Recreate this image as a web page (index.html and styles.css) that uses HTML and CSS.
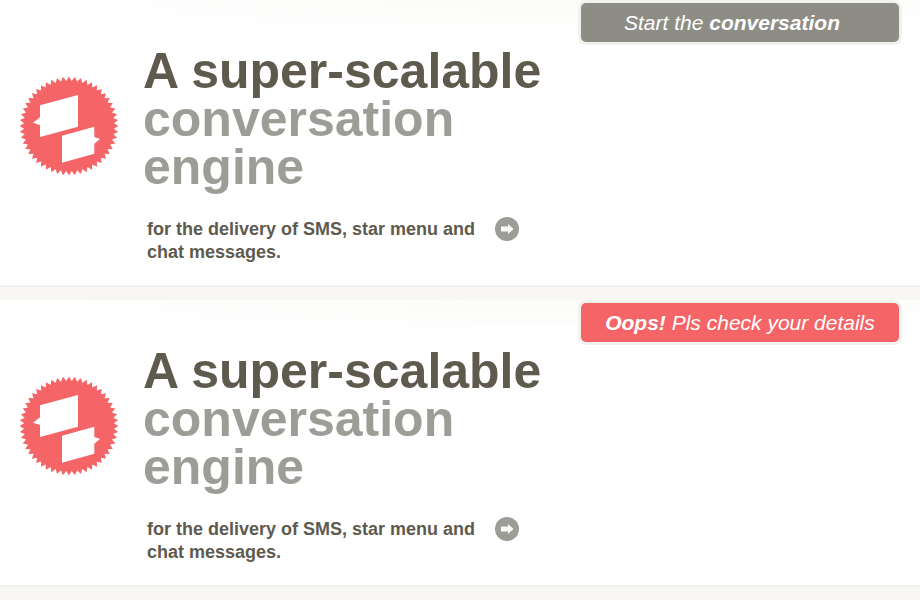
FILE: index.html
```html
<!DOCTYPE html>
<html lang="en">
<head>
  <meta charset="utf-8">
  <title>Conversation engine</title>
  <link rel="stylesheet" href="styles.css">
</head>
<body>
  <svg class="defs" aria-hidden="true">
    <symbol id="logo" viewBox="0 0 100 100">
      <polygon class="seal" points=""/>
      <path fill="#fff" d="M21 29.3 59 19V50.7L21 61V49L14 46.7 21 41.3Z"/>
      <path fill="#fff" d="M43 59.7 75.3 50.7V61L81 63 75.3 67.7V77.7L43 86.7Z"/>
    </symbol>
    <symbol id="arrow" viewBox="0 0 24 24">
      <circle cx="12" cy="12" r="12" fill="#9d9c96"/>
      <path fill="#fbfbf8" d="M6 9.6H13V7L18.6 12 13 17V14.4H6Z"/>
    </symbol>
  </svg>

  <section class="banner">
    <div class="content">
      <svg class="logo" role="img" aria-label="Two speech bubbles"><use href="#logo"/></svg>
      <div class="copy">
        <h1 class="title">A super-scalable <span class="soft">conversation engine</span></h1>
        <div class="lead">
          <p class="text">for the delivery of SMS, star menu and chat messages.</p>
          <a class="more" href="#more" aria-label="Read more"><svg class="arrow"><use href="#arrow"/></svg></a>
        </div>
      </div>
      <button class="action start" type="button">Start the <b>conversation</b></button>
    </div>
  </section>

  <section class="banner">
    <div class="content">
      <svg class="logo" role="img" aria-label="Two speech bubbles"><use href="#logo"/></svg>
      <div class="copy">
        <h1 class="title">A super-scalable <span class="soft">conversation engine</span></h1>
        <div class="lead">
          <p class="text">for the delivery of SMS, star menu and chat messages.</p>
          <a class="more" href="#more" aria-label="Read more"><svg class="arrow"><use href="#arrow"/></svg></a>
        </div>
      </div>
      <button class="action error" type="button"><b>Oops!</b> Pls check your details</button>
    </div>
  </section>
  <script src="seal.js"></script>
</body>
</html>
```
FILE: styles.css
```css
* {
  box-sizing: border-box;
}

body {
  margin: 0;
  background: #fff;
  color: #5e5a4e;
  font-family: "Liberation Sans", Arial, sans-serif;
}

.defs {
  position: absolute;
  width: 0;
  height: 0;
}

.seal {
  fill: #f56467;
}

.banner {
  background: radial-gradient(ellipse 60% 40px at 60% 0, #fbfbf9, #fff) no-repeat top / 100% 26px;
}

.banner::after {
  content: "";
  display: block;
  height: 13px;
  border-top: 2px solid #f0f0ed;
  background: #f8f7f3;
}

.content {
  display: grid;
  grid-template-columns: 100px 1fr 324px;
  column-gap: 24px;
  align-items: start;
  padding: 0 18px 21px 19px;
}

.logo {
  display: block;
  width: 100px;
  height: 100px;
  margin-top: 76px;
}

.copy {
  padding-top: 47px;
  margin-right: -24px;
}

.title {
  margin: 0;
  font-size: 50px;
  line-height: 48px;
}

.soft {
  display: block;
  max-width: 350px;
  color: #9d9c96;
}

.lead {
  display: flex;
  align-items: flex-start;
  margin-top: 26px;
  padding-left: 4px;
}

.text {
  width: 348px;
  margin: 0;
  padding-top: 1px;
  font-size: 18px;
  font-weight: bold;
  line-height: 23px;
}

.more,
.arrow {
  display: block;
  width: 24px;
  height: 24px;
}

.action {
  height: 45px;
  padding: 0;
  border: 3px solid #f1f1ed;
  border-radius: 8px;
  background: #8d8c85;
  color: #fff;
  font-family: inherit;
  font-size: 21px;
  font-style: italic;
  line-height: 24px;
}

.start {
  padding-right: 16px;
}

.error {
  background: #f56467;
}
```
FILE: seal.js
```js
// Serrated edge of the logo: alternating outer and inner points round a circle.
const teeth = 52;
const points = [];
for (let i = 0; i < teeth * 2; i++) {
  const radius = i % 2 ? 45 : 49.5;
  const angle = (i * Math.PI) / teeth;
  points.push(`${50 + radius * Math.sin(angle)},${50 - radius * Math.cos(angle)}`);
}
document.querySelector(".seal").setAttribute("points", points.join(" "));
```
